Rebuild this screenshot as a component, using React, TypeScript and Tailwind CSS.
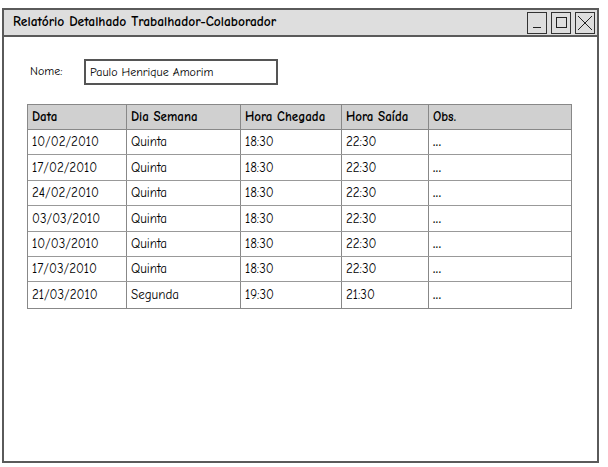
import React from "react";

const rows = [
  ["10/02/2010", "Quinta", "18:30", "22:30", "..."],
  ["17/02/2010", "Quinta", "18:30", "22:30", "..."],
  ["24/02/2010", "Quinta", "18:30", "22:30", "..."],
  ["03/03/2010", "Quinta", "18:30", "22:30", "..."],
  ["10/03/2010", "Quinta", "18:30", "22:30", "..."],
  ["17/03/2010", "Quinta", "18:30", "22:30", "..."],
  ["21/03/2010", "Segunda", "19:30", "21:30", "..."],
];

const headers = ["Data", "Dia Semana", "Hora Chegada", "Hora Saída", "Obs."];
const widths = ["w-[99px]", "w-[114px]", "w-[101px]", "w-[87px]", "flex-1"];

const font = { fontFamily: '"Comic Sans MS", "Comic Neue", "Noto Sans", "Liberation Sans", sans-serif' };

export default function App() {
  return (
    <div className="w-[608px] h-[467px] bg-white overflow-hidden" style={font}>
      <div className="ml-[2px] mt-[8px] w-[597px] h-[455px] border-2 border-[#5a5a5a] flex flex-col">
        <div className="h-[27px] bg-[#dedede] border-b-2 border-[#5a5a5a] flex items-center pl-[9px] pr-[2px]">
          <span className="text-[13.5px] font-bold text-black">Relatório Detalhado Trabalhador-Colaborador</span>
          <div className="ml-auto flex gap-[4px]">
            <div className="w-[20px] h-[22px] border border-[#333] flex items-end justify-center pb-[5px]">
              <div className="w-[8px] h-[1px] bg-[#222]" />
            </div>
            <div className="w-[20px] h-[22px] border border-[#333] flex items-center justify-center">
              <div className="w-[11px] h-[11px] border border-[#222]" />
            </div>
            <div className="w-[20px] h-[22px] border border-[#333] flex items-center justify-center">
              <svg width="16" height="16" viewBox="0 0 16 16">
                <path d="M1 1 L15 15 M15 1 L1 15" stroke="#222" strokeWidth="1" />
              </svg>
            </div>
          </div>
        </div>
        <div className="pl-[23px] pt-[22px]">
          <div className="flex items-start">
            <span className="text-[12px] text-black mt-[3px] w-[57px] pl-[3px]">Nome:</span>
            <div className="w-[194px] h-[26px] border-2 border-[#555] flex items-center pl-[4px]">
              <span className="text-[12px] text-black">Paulo Henrique Amorim</span>
            </div>
          </div>
          <div className="mt-[19px] w-[545px] border border-[#888]">
            <div className="flex h-[25px] bg-[#d0d0d0] border-b border-[#888]">
              {headers.map((h, i) => (
                <div
                  key={h}
                  className={`${widths[i]} flex items-center pl-[4px] text-[13px] font-bold text-black ${i < 4 ? "border-r border-[#888]" : ""}`}
                >
                  {h}
                </div>
              ))}
            </div>
            {rows.map((r, ri) => (
              <div key={ri} className={`flex h-[25.4px] ${ri < rows.length - 1 ? "border-b border-[#999]" : ""}`}>
                {r.map((c, i) => (
                  <div
                    key={i}
                    className={`${widths[i]} flex items-center pl-[4px] text-[13px] text-black ${i < 4 ? "border-r border-[#888]" : "font-bold tracking-[0.5px]"}`}
                  >
                    {c}
                  </div>
                ))}
              </div>
            ))}
          </div>
        </div>
      </div>
    </div>
  );
}
